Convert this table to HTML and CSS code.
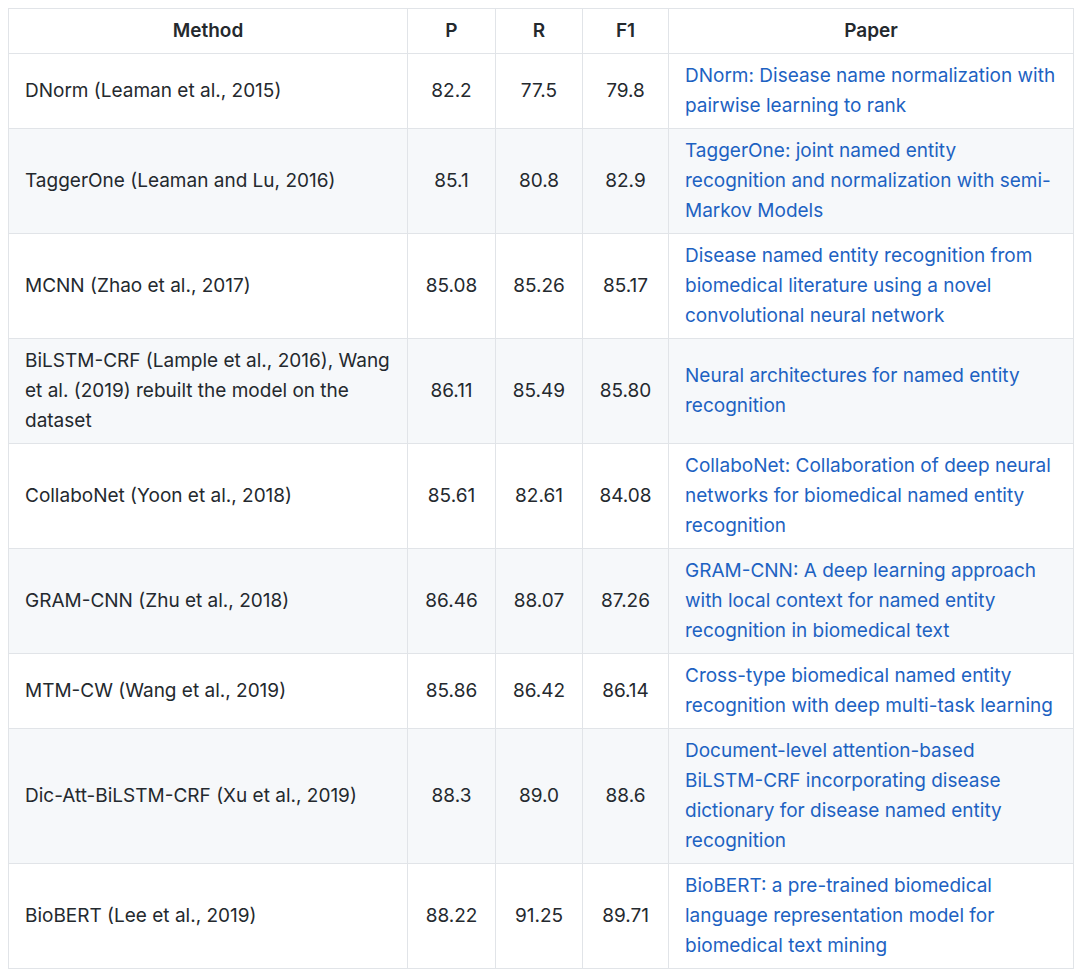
FILE: index.html
```html
<!DOCTYPE html>
<html>
<head>
<meta charset="utf-8">
<link rel="stylesheet" href="styles.css">
</head>
<body>
<table class="results">
  <colgroup>
    <col class="c-method">
    <col class="c-num">
    <col class="c-num">
    <col class="c-num">
    <col class="c-paper">
  </colgroup>
  <thead>
    <tr><th>Method</th><th>P</th><th>R</th><th>F1</th><th>Paper</th></tr>
  </thead>
  <tbody>
    <tr><td>DNorm (Leaman et al., 2015)</td><td class="num">82.2</td><td class="num">77.5</td><td class="num">79.8</td><td><a href="#">DNorm: Disease name normalization with pairwise learning to rank</a></td></tr>
    <tr><td>TaggerOne (Leaman and Lu, 2016)</td><td class="num">85.1</td><td class="num">80.8</td><td class="num">82.9</td><td><a href="#">TaggerOne: joint named entity recognition and normalization with semi-Markov Models</a></td></tr>
    <tr><td>MCNN (Zhao et al., 2017)</td><td class="num">85.08</td><td class="num">85.26</td><td class="num">85.17</td><td><a href="#">Disease named entity recognition from biomedical literature using a novel convolutional neural network</a></td></tr>
    <tr><td>BiLSTM-CRF (Lample et al., 2016), Wang et al. (2019) rebuilt the model on the dataset</td><td class="num">86.11</td><td class="num">85.49</td><td class="num">85.80</td><td><a href="#">Neural architectures for named entity recognition</a></td></tr>
    <tr><td>CollaboNet (Yoon et al., 2018)</td><td class="num">85.61</td><td class="num">82.61</td><td class="num">84.08</td><td><a href="#">CollaboNet: Collaboration of deep neural networks for biomedical named entity recognition</a></td></tr>
    <tr><td>GRAM-CNN (Zhu et al., 2018)</td><td class="num">86.46</td><td class="num">88.07</td><td class="num">87.26</td><td><a href="#">GRAM-CNN: A deep learning approach with local context for named entity recognition in biomedical text</a></td></tr>
    <tr><td>MTM-CW (Wang et al., 2019)</td><td class="num">85.86</td><td class="num">86.42</td><td class="num">86.14</td><td><a href="#">Cross-type biomedical named entity recognition with deep multi-task learning</a></td></tr>
    <tr><td>Dic-Att-BiLSTM-CRF (Xu et al., 2019)</td><td class="num">88.3</td><td class="num">89.0</td><td class="num">88.6</td><td><a href="#">Document-level attention-based <span class="nowrap">BiLSTM-CRF</span> incorporating disease dictionary for disease named entity recognition</a></td></tr>
    <tr><td>BioBERT (Lee et al., 2019)</td><td class="num">88.22</td><td class="num">91.25</td><td class="num">89.71</td><td><a href="#">BioBERT: a pre-trained biomedical language representation model for biomedical text mining</a></td></tr>
  </tbody>
</table>
</body>
</html>
```

FILE: styles.css
```css
html, body {
  margin: 0;
  background: #ffffff;
}
body {
  padding: 8px 0 0 8px;
  font-family: Inter, "Liberation Sans", Arial, sans-serif;
  font-size: 19px;
  line-height: 30px;
  color: #24292e;
}
.results {
  border-collapse: collapse;
  border-spacing: 0;
  table-layout: fixed;
  width: 1065px;
}
.c-method { width: 399px; }
.c-num:nth-child(2) { width: 88px; }
.c-num:nth-child(3) { width: 87px; }
.c-num:nth-child(4) { width: 86px; }
.c-paper { width: 405px; }
.results th,
.results td {
  border: 1px solid #e1e4e8;
  padding: 7px 16px;
  vertical-align: middle;
  text-align: left;
}
.results th {
  font-weight: 600;
  text-align: center;
}
.results td.num {
  text-align: center;
}
.results tbody tr:nth-child(even) {
  background: #f6f8fa;
}
.results a {
  color: #1d62c2;
  text-decoration: none;
}
.nowrap {
  white-space: nowrap;
}
```
